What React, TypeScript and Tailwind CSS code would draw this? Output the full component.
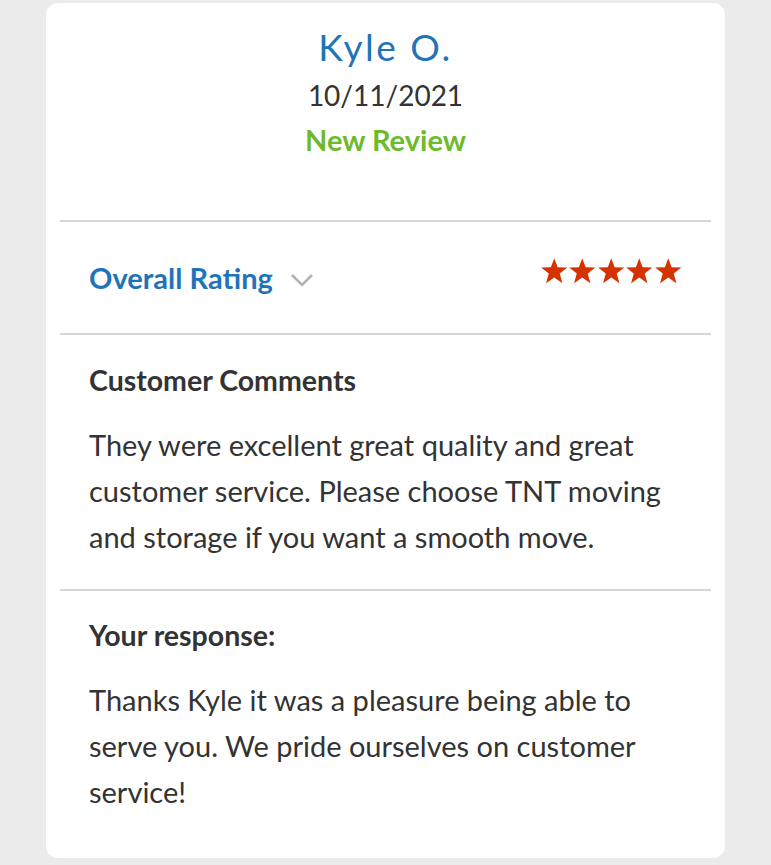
import React from "react";

const Star = () => (
  <svg viewBox="0 0 24 24" className="h-[28px] w-[28.5px]" fill="#d43300">
    <polygon points="12,1 14.9,8.8 23.2,9 16.7,14.1 19,22.4 12,17.6 5,22.4 7.3,14.1 0.8,9 9.1,8.8" />
  </svg>
);

const Divider = () => <div className="mx-[14px] h-[2px] bg-[#d6d6d6]" />;

export default function App() {
  return (
    <div
      className="min-h-[865px] bg-[#ebebeb] pt-[3px]"
      style={{ fontFamily: "Lato, 'Open Sans', sans-serif" }}
    >
      <div className="ml-[46px] w-[679px] rounded-[12px] bg-white">
        {/* header */}
        <div className="flex flex-col items-center pt-[19px] pb-[59px]">
          <div className="text-[37px] leading-[50px] font-normal tracking-[2.5px] text-[#1f74b9]">
            Kyle O.
          </div>
          <div className="text-[28px] leading-[46px] text-[#333333]">10/11/2021</div>
          <div className="text-[29px] leading-[43px] font-bold text-[#6dbb2b]">
            New Review
          </div>
        </div>

        <Divider />

        <div className="flex h-[111px] items-center justify-between pl-[43px] pr-[43px]">
          <div className="flex items-center gap-[17px]">
            <span className="text-[29px] font-bold text-[#1f74b9]">Overall Rating</span>
            <svg viewBox="0 0 24 16" className="mt-[4px] h-[16px] w-[24px]">
              <polyline
                points="2,3 12,13 22,3"
                fill="none"
                stroke="#b3b3b3"
                strokeWidth="2.6"
              />
            </svg>
          </div>
          <div className="-mt-[14px] flex">
            <Star />
            <Star />
            <Star />
            <Star />
            <Star />
          </div>
        </div>

        <Divider />

        <div className="px-[43px] pt-[22px] pb-[29px] text-[#333333]">
          <div className="text-[28.5px] leading-[46px] font-bold">Customer Comments</div>
          <p className="mt-[19px] text-[29px] leading-[46px]">
            They were excellent great quality and great customer service. Please
            choose TNT moving and storage if you want a smooth move.
          </p>
        </div>

        <Divider />

        <div className="px-[43px] pt-[21px] pb-[43px] text-[#333333]">
          <div className="text-[28.5px] leading-[46px] font-bold">Your response:</div>
          <p className="mt-[19px] text-[29px] leading-[46px]">
            Thanks Kyle it was a pleasure being able to serve you. We pride
            ourselves on customer service!
          </p>
        </div>
      </div>
    </div>
  );
}
